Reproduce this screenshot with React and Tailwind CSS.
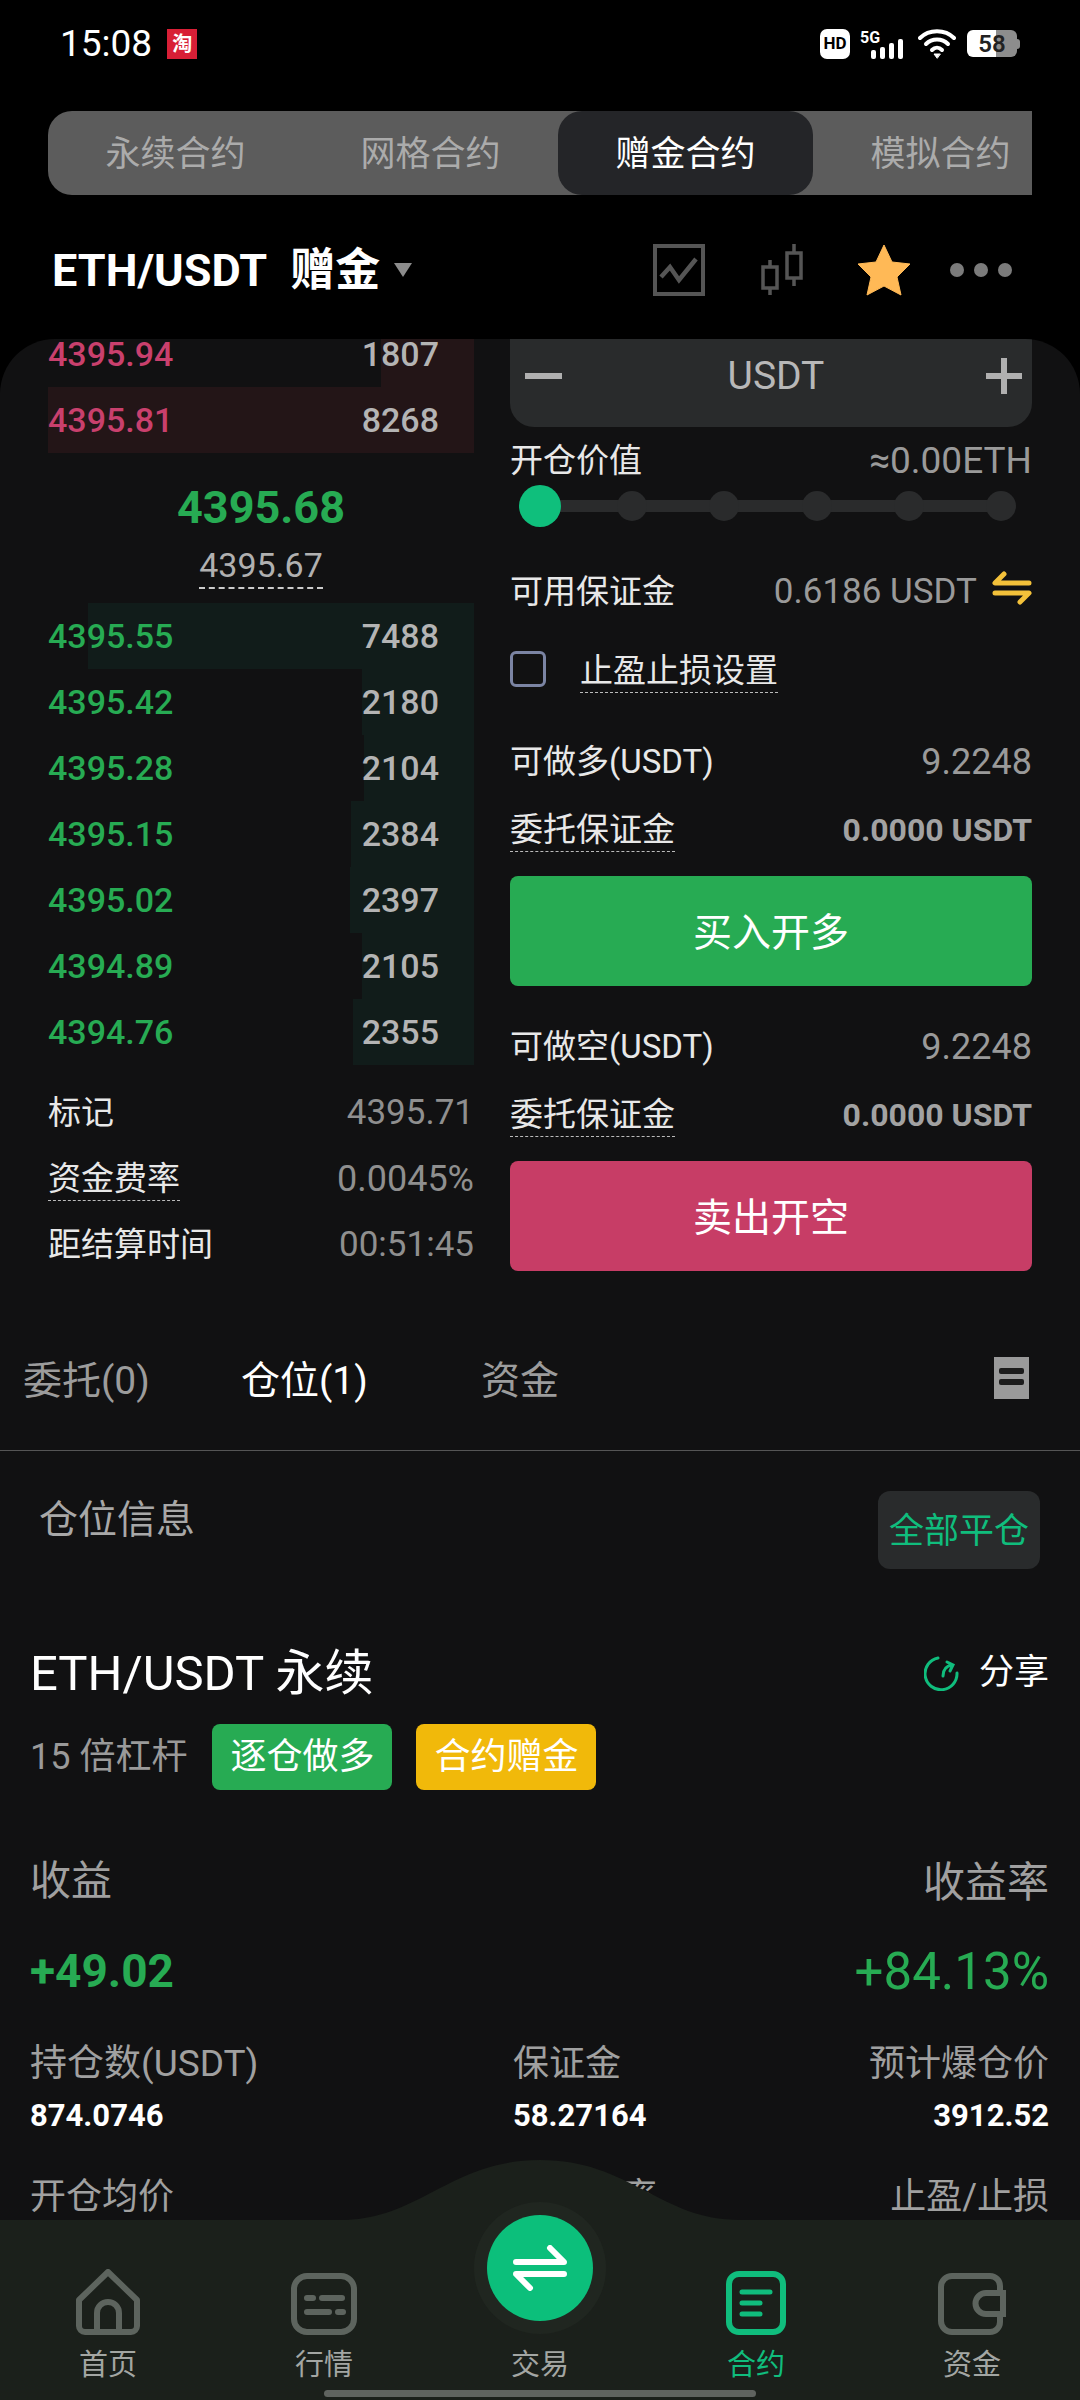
import { Fragment } from 'react'

const asks = [
  { price: '4395.94', size: '1807', bar: 93 },
  { price: '4395.81', size: '8268', bar: 426 },
]

const bids = [
  { price: '4395.55', size: '7488', bar: 386 },
  { price: '4395.42', size: '2180', bar: 112 },
  { price: '4395.28', size: '2104', bar: 110 },
  { price: '4395.15', size: '2384', bar: 123 },
  { price: '4395.02', size: '2397', bar: 124 },
  { price: '4394.89', size: '2105', bar: 112 },
  { price: '4394.76', size: '2355', bar: 121 },
]

function BookRow({ row, side }) {
  return (
    <div className="relative flex h-[66px] items-center justify-between pr-[35px] text-[34px] font-medium">
      <div
        className={`absolute top-0 right-0 bottom-0 ${side === 'ask' ? 'bg-[#231517]' : 'bg-[#111c1a]'}`}
        style={{ width: row.bar }}
      />
      <span className={`relative ${side === 'ask' ? 'text-[#c9406d]' : 'text-[#27ab53]'}`}>{row.price}</span>
      <span className="relative text-[#b4b4b4]">{row.size}</span>
    </div>
  )
}

function StatusIcons() {
  return (
    <div className="flex items-center">
      <div className="flex h-[30px] w-[30px] items-center justify-center rounded-[7px] bg-white text-[17px] font-bold leading-none text-black">HD</div>
      <svg className="ml-[10px]" width="46" height="32" viewBox="0 0 46 32">
        <text x="0" y="15" fill="#fff" fontSize="16" fontWeight="700" fontFamily="Roboto">5G</text>
        <rect x="11" y="22" width="5" height="9" rx="2" fill="#fff" />
        <rect x="20" y="19" width="5" height="12" rx="2" fill="#fff" />
        <rect x="29" y="15" width="5" height="16" rx="2" fill="#fff" />
        <rect x="38" y="11" width="5" height="20" rx="2" fill="#fff" />
      </svg>
      <svg className="ml-[12px]" width="38" height="30" viewBox="0 0 38 30" fill="none" stroke="#fff" strokeWidth="4" strokeLinecap="round">
        <path d="M2 9C11 0 27 0 36 9" />
        <path d="M8 15C14 9 24 9 30 15" />
        <path d="M14 21C17 18 21 18 24 21" />
        <path d="M19 29l-3-4h6z" fill="#fff" strokeWidth="1" />
      </svg>
      <div className="ml-[11px] flex h-[27px] w-[50px] items-center justify-center rounded-[6px] bg-[linear-gradient(90deg,#fff_58%,#8d8d8d_58%)] text-[24px] font-semibold leading-none text-[#222]">58</div>
      <div className="h-[10px] w-[3px] rounded-r-sm bg-[#8d8d8d]" />
    </div>
  )
}

function HeaderIcons() {
  return (
    <div className="flex items-center">
      <svg width="52" height="52" viewBox="0 0 52 52" fill="none" stroke="#555" strokeWidth="4">
        <rect x="2" y="2" width="48" height="48" />
        <path d="M8 33l9-10 9 13 17-21" strokeWidth="4.5" />
      </svg>
      <svg className="ml-[54px]" width="46" height="52" viewBox="0 0 46 52" fill="none" stroke="#555" strokeWidth="3.5">
        <rect x="4" y="23" width="14" height="21" />
        <path d="M11 16v7M11 44v7" />
        <rect x="28" y="9" width="14" height="25" />
        <path d="M35 0v9M35 34v8" />
      </svg>
      <svg className="ml-[52px]" width="54" height="52" viewBox="0 0 54 52">
        <path d="M27 1l8 17 18 2-13 13 4 18-17-9-17 9 4-18L1 20l18-2z" fill="#ffb956" stroke="#ffb956" strokeLinejoin="round" />
      </svg>
      <svg className="ml-[38px]" width="64" height="16" viewBox="0 0 64 16" fill="#7b7b7b">
        <circle cx="8" cy="8" r="7" />
        <circle cx="32" cy="8" r="7" />
        <circle cx="56" cy="8" r="7" />
      </svg>
    </div>
  )
}

function Slider() {
  return (
    <div className="relative flex h-[42px] items-center justify-between pl-[9px] pr-[16px]">
      <div className="absolute left-[10px] right-[20px] h-[12px] bg-[#2a2b2c]" />
      <div className="relative -mr-[6px] h-[42px] w-[42px] rounded-full bg-[#0fbf7c]" />
      {[0, 1, 2, 3, 4].map(i => (
        <div key={i} className="relative h-[30px] w-[30px] rounded-full bg-[#2a2b2c]" />
      ))}
    </div>
  )
}

function OrderSide({ title, button, color }) {
  return (
    <Fragment>
      <div className="flex h-[68px] items-center justify-between">
        <span className="text-[33px] text-[#e8e8e8]">{title}</span>
        <span className="text-[36px] text-[#9a9a9a]">9.2248</span>
      </div>
      <div className="flex h-[68px] items-center justify-between">
        <span className="border-b border-dashed border-[#bbb] text-[33px] leading-[42px] text-[#e8e8e8]">委托保证金</span>
        <span className="text-[32px] font-bold text-[#a2a2a2]">0.0000 USDT</span>
      </div>
      <button className={`mt-[12px] flex h-[110px] w-full items-center justify-center rounded-[8px] pt-[5px] text-[39px] text-white ${color}`}>{button}</button>
    </Fragment>
  )
}

function NavIcon({ name }) {
  const c = '#5d645e'
  if (name === 'home') {
    return (
      <svg width="66" height="66" viewBox="0 0 66 66" fill="none" stroke={c} strokeWidth="6" strokeLinejoin="round">
        <path d="M33 3L4 31v26a6 6 0 0 0 6 6h46a6 6 0 0 0 6-6V31z" />
        <path d="M22 63V44a11 11 0 0 1 22 0v19" />
      </svg>
    )
  }
  if (name === 'market') {
    return (
      <svg width="66" height="62" viewBox="0 0 66 62" fill="none" stroke={c} strokeWidth="6">
        <rect x="3" y="3" width="60" height="56" rx="13" />
        <path d="M16 25h6M31 25h20M16 39h22M47 39h5" strokeWidth="6" strokeLinecap="round" />
      </svg>
    )
  }
  if (name === 'contract') {
    return (
      <svg width="60" height="64" viewBox="0 0 60 64" fill="none" stroke="#10bd7d" strokeWidth="6">
        <rect x="3" y="3" width="54" height="58" rx="10" />
        <path d="M16 21h28M16 32h18M16 43h18" strokeWidth="5" strokeLinecap="round" />
      </svg>
    )
  }
  return (
    <svg width="68" height="62" viewBox="0 0 68 62" fill="none" stroke={c} strokeWidth="6">
      <path d="M62 20V13a10 10 0 0 0-10-10H14A11 11 0 0 0 3 14v34a11 11 0 0 0 11 11h38a10 10 0 0 0 10-10v-8" />
      <path d="M65 20H48a10 10 0 0 0 0 21h17z" />
    </svg>
  )
}

function BottomNav() {
  const items = [
    { label: '首页', icon: 'home' },
    { label: '行情', icon: 'market' },
    { label: '交易' },
    { label: '合约', icon: 'contract', active: true },
    { label: '资金', icon: 'wallet' },
  ]
  return (
    <div className="absolute right-0 bottom-0 left-0 h-[240px]">
      <svg className="block" width="1080" height="60" viewBox="0 0 1080 60">
        <path d="M340 60C420 60 450 0 540 0S660 60 740 60z" fill="#1b201b" />
      </svg>
      <div className="grid h-[180px] grid-cols-5 bg-[#1b201b]">
        {items.map(item => (
          <div key={item.label} className="flex flex-col items-center">
            <div className="flex h-[115px] items-end justify-center">{item.icon && <NavIcon name={item.icon} />}</div>
            <span className={`mt-[12px] text-[29px] leading-[36px] ${item.active ? 'text-[#10bd7d]' : 'text-[#a3a6a3]'}`}>{item.label}</span>
          </div>
        ))}
      </div>
      <div className="absolute top-[42px] left-[474px] flex h-[132px] w-[132px] items-center justify-center rounded-full bg-[#202620]">
        <div className="flex h-[106px] w-[106px] items-center justify-center rounded-full bg-[#0cbf7b]">
          <svg width="54" height="46" viewBox="0 0 54 46" fill="none" stroke="#fff" strokeWidth="6" strokeLinecap="round" strokeLinejoin="round">
            <path d="M3 17h48L37 3" />
            <path d="M51 29H3l14 14" />
          </svg>
        </div>
      </div>
      <div className="absolute bottom-[3px] left-[324px] h-[7px] w-[432px] rounded-full bg-[#5f635f]" />
    </div>
  )
}

export default function App() {
  return (
    <div className="relative h-[2400px] w-[1080px] overflow-hidden bg-black font-[Roboto,'Noto_Sans_CJK_SC',sans-serif] text-white">

      {/* status bar */}
      <div className="flex h-[87px] items-center justify-between pl-[60px] pr-[60px]">
        <div className="flex items-center">
          <span className="text-[37px] leading-none">15:08</span>
          <div className="ml-[15px] flex h-[30px] w-[30px] items-center justify-center bg-[#d81f36] text-[20px] font-bold leading-none text-white">淘</div>
        </div>
        <StatusIcons />
      </div>

      {/* contract tabs */}
      <div className="ml-[48px] mt-[24px] flex h-[84px] w-[984px] overflow-hidden rounded-l-[24px] bg-[#5c5c5c] text-[35px] text-[#ababab]">
        {['永续合约', '网格合约', '赠金合约', '模拟合约'].map(t => (
          <div
            key={t}
            className={`flex w-[255px] shrink-0 items-center justify-center pt-[5px] ${t === '赠金合约' ? 'rounded-[24px] bg-[#242528] text-white' : ''}`}
          >
            {t}
          </div>
        ))}
      </div>

      {/* pair header */}
      <div className="flex h-[144px] items-center justify-between pl-[52px] pr-[67px] pt-[6px]">
        <div className="flex items-center">
          <span className="text-[45px] font-bold leading-none">ETH/USDT</span>
          <span className="ml-[23px] text-[45px] font-bold leading-none">赠金</span>
          <span className="ml-[14px] h-0 w-0 border-x-[9px] border-t-[14px] border-x-transparent border-t-[#8c8c8c]" />
        </div>
        <HeaderIcons />
      </div>

      <div className="h-[2061px] overflow-hidden rounded-t-[55px] bg-[#111112]">

        <div className="flex h-[939px] gap-[36px] overflow-hidden px-[48px]">
          {/* order book */}
          <div className="-mt-[18px] w-[426px] shrink-0">
            {asks.map(r => <BookRow key={r.price} row={r} side="ask" />)}
            <div className="flex h-[150px] flex-col items-center">
              <span className="mt-[29px] text-[45px] font-bold leading-[52px] text-[#27ab53]">4395.68</span>
              <span className="mt-[9px] border-b-2 border-dashed border-[#ccc] text-[34px] leading-[44px] text-[#b0b0b0]">4395.67</span>
            </div>
            {bids.map(r => <BookRow key={r.price} row={r} side="bid" />)}
            <div className="mt-[15px] text-[33px]">
              <div className="flex h-[66px] items-center justify-between">
                <span className="text-[#e8e8e8]">标记</span>
                <span className="text-[35px] text-[#8f8f8f]">4395.71</span>
              </div>
              <div className="flex h-[66px] items-center justify-between">
                <span className="border-b border-dashed border-[#bbb] leading-[42px] text-[#e8e8e8]">资金费率</span>
                <span className="text-[36px] text-[#8f8f8f]">0.0045%</span>
              </div>
              <div className="flex h-[66px] items-center justify-between">
                <span className="text-[#e8e8e8]">距结算时间</span>
                <span className="text-[35px] text-[#8f8f8f]">00:51:45</span>
              </div>
            </div>
          </div>

          {/* order form */}
          <div className="min-w-0 flex-1">
            <div className="flex h-[88px] items-center justify-between rounded-b-[24px] bg-[#292b2c] px-[15px] pb-[14px] text-[#b8b8b8]">
              <span className="h-[6px] w-[37px] bg-[#b0b0b0]" />
              <span className="pl-[4px] text-[39px] leading-none">USDT</span>
              <svg width="36" height="36" viewBox="0 0 36 36" className="mr-[-5px]" fill="#b0b0b0">
                <rect x="0" y="15" width="36" height="6" />
                <rect x="15" y="0" width="6" height="36" />
              </svg>
            </div>
            <div className="mt-[10px] flex h-[48px] items-center justify-between text-[33px]">
              <span className="text-[#e8e8e8]">开仓价值</span>
              <span className="text-[37px] text-[#9a9a9a]">≈0.00ETH</span>
            </div>
            <Slider />
            <div className="mt-[41px] flex h-[48px] items-center text-[33px]">
              <span className="text-[#e8e8e8]">可用保证金</span>
              <span className="ml-auto text-[35px] text-[#9a9a9a]">0.6186 USDT</span>
              <svg className="ml-[15px] mb-[9px]" width="40" height="34" viewBox="0 0 40 34" fill="none" stroke="#f3c13a" strokeWidth="5" strokeLinecap="round" strokeLinejoin="round">
                <path d="M12 3L3 12h34" />
                <path d="M28 31l9-9H3" />
              </svg>
            </div>
            <div className="mt-[31px] flex h-[44px] items-center">
              <div className="h-[36px] w-[36px] rounded-[6px] border-[3px] border-[#7b84a3]" />
              <span className="ml-[34px] mt-[4px] border-b border-dashed border-[#bbb] text-[33px] leading-[42px] text-[#e8e8e8]">止盈止损设置</span>
            </div>
            <div className="mt-[37px]">
              <OrderSide title="可做多(USDT)" button="买入开多" color="bg-[#27ab53]" />
            </div>
            <div className="mt-[27px]">
              <OrderSide title="可做空(USDT)" button="卖出开空" color="bg-[#c73d66]" />
            </div>
          </div>
        </div>

        {/* position tabs */}
        <div className="flex h-[173px] items-center border-b border-[#555] pl-[23px] pr-[51px] pt-[35px] text-[39px]">
          <span className="w-[218px] text-[#9c9c9c]">委托(0)</span>
          <span className="w-[240px] text-white">仓位(1)</span>
          <span className="text-[#9c9c9c]">资金</span>
          <svg className="ml-auto mb-[8px]" width="35" height="42" viewBox="0 0 35 42">
            <rect width="35" height="42" fill="#9a9a9a" />
            <rect x="5" y="11" width="25" height="6" rx="2" fill="#1c1c1c" />
            <rect x="5" y="22" width="25" height="6" rx="2" fill="#1c1c1c" />
          </svg>
        </div>

        {/* position card */}
        <div className="pl-[30px] pr-[31px] text-[36px]">
          <div className="flex items-start justify-between pl-[9px] pt-[40px] pr-[9px]">
            <span className="mt-[6px] text-[39px] leading-[46px] text-[#a8a8a8]">仓位信息</span>
            <span className="flex h-[78px] w-[162px] items-center justify-center rounded-[12px] bg-[#292b2c] pt-[5px] text-[35px] text-[#10bd7d]">全部平仓</span>
          </div>
          <div className="mt-[75px] flex h-[58px] items-center justify-between">
            <span className="text-[49px] leading-none">ETH/USDT 永续</span>
            <div className="flex items-center">
              <svg width="36" height="36" viewBox="0 0 36 36" fill="none" stroke="#10bd7d" strokeWidth="3" strokeLinecap="round">
                <path d="M14 3A16 16 0 1 0 33 18" />
                <path d="M19 21c0-6 3-10 9-11M23 7l6 3-3 6" />
              </svg>
              <span className="ml-[19px] text-[35px]">分享</span>
            </div>
          </div>
          <div className="mt-[22px] flex h-[66px] items-center">
            <span className="text-[36px] text-[#9a9a9a]">15 倍杠杆</span>
            <span className="ml-[25px] flex h-[66px] w-[180px] items-center justify-center rounded-[8px] bg-[#27ab53] text-[36px]">逐仓做多</span>
            <span className="ml-[24px] flex h-[66px] w-[180px] items-center justify-center rounded-[8px] bg-[#f1b90a] text-[36px]">合约赠金</span>
          </div>
          <div className="mt-[68px] flex h-[48px] items-center justify-between text-[41px] text-[#a0a0a0]">
            <span>收益</span>
            <span className="text-[42px]">收益率</span>
          </div>
          <div className="mt-[37px] flex h-[56px] items-center justify-between text-[#27ab53]">
            <span className="text-[46px] font-bold leading-none">+49.02</span>
            <span className="text-[51px] leading-none">+84.13%</span>
          </div>
          <div className="mt-[41px] grid grid-cols-[483px_1fr_auto] text-[#a0a0a0]">
            <span className="text-[37px] leading-[48px]">持仓数(USDT)</span>
            <span className="leading-[48px]">保证金</span>
            <span className="text-right leading-[48px]">预计爆仓价</span>
            <span className="mt-[8px] text-[31px] font-bold leading-[40px] text-white">874.0746</span>
            <span className="mt-[8px] text-[31px] font-bold leading-[40px] text-white">58.27164</span>
            <span className="mt-[8px] text-right text-[31px] font-bold leading-[40px] text-white">3912.52</span>
            <span className="mt-[37px] leading-[48px]">开仓均价</span>
            <span className="mt-[37px] leading-[48px]">保证金率</span>
            <span className="mt-[37px] text-right leading-[48px]">止盈/止损</span>
          </div>
        </div>
      </div>

      <BottomNav />
    </div>
  )
}
